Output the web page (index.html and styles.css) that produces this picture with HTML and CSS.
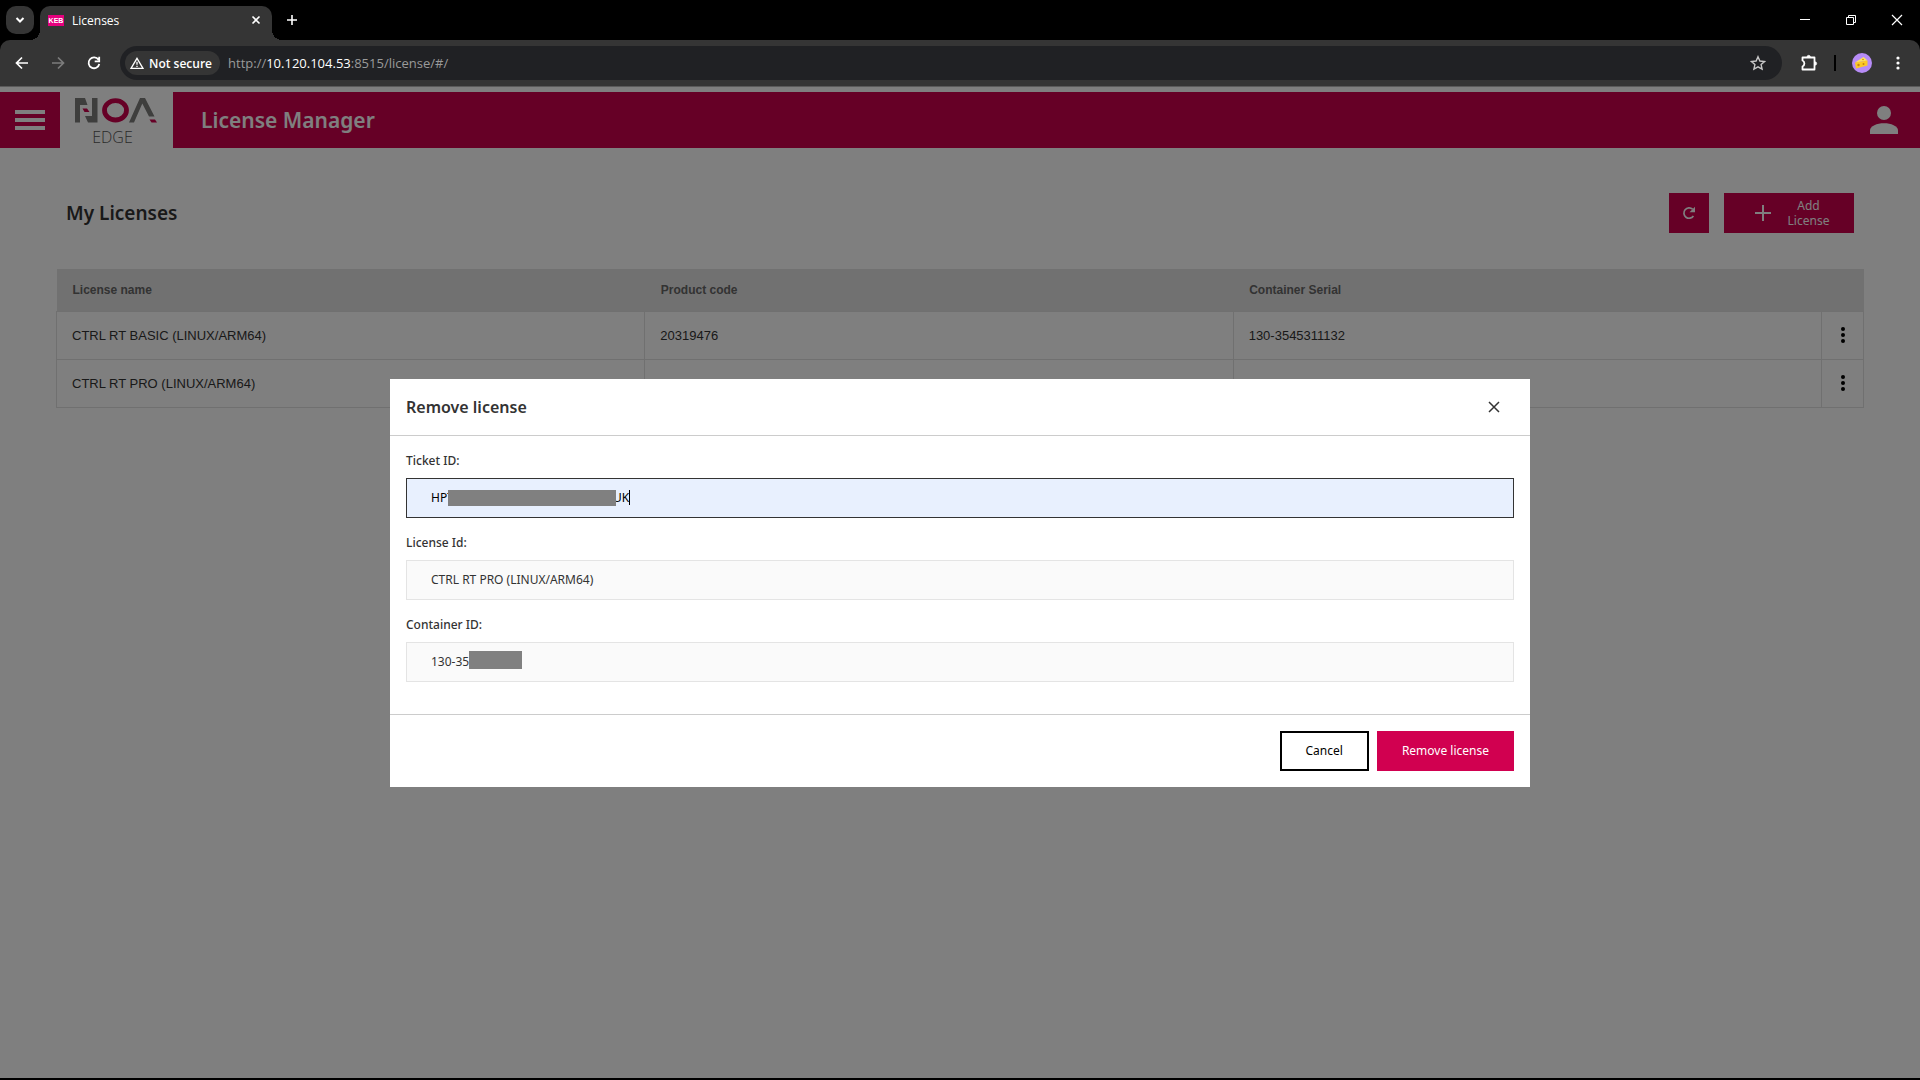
FILE: index.html
```html
<!DOCTYPE html>
<html lang="en">
<head>
    <meta charset="UTF-8">
    <meta name="viewport" content="width=device-width, initial-scale=1.0">
    <title>Licenses</title>
    <link rel="stylesheet" href="styles.css">
</head>
<body>
    <div class="tab-bar">
        <button class="tab-search" type="button" aria-label="Search tabs">
            <svg width="10" height="10" viewBox="0 0 10 10"><path d="M1.500 3l3.500 3.500L8.500 3" fill="none" stroke="#fff" stroke-width="2"/></svg>
        </button>
        <div class="tab">
            <span class="favicon">KEB</span>
            <span class="tab-title">Licenses</span>
            <button class="icon-btn" type="button" aria-label="Close tab">
                <svg width="10" height="10" viewBox="0 0 10 10"><path d="M1.500 1.500l7 7M8.500 1.500l-7 7" stroke="#fff" stroke-width="1.600"/></svg>
            </button>
        </div>
        <button class="icon-btn new-tab" type="button" aria-label="New tab">
            <svg width="12" height="12" viewBox="0 0 12 12"><path d="M6 1v10M1 6h10" stroke="#fff" stroke-width="1.600"/></svg>
        </button>
        <div class="window-controls">
            <button class="icon-btn" type="button" aria-label="Minimize">
                <svg width="12" height="12" viewBox="0 0 12 12"><path d="M1 5.500h10" stroke="#fff"/></svg>
            </button>
            <button class="icon-btn" type="button" aria-label="Restore">
                <svg width="12" height="12" viewBox="0 0 12 12"><path d="M1.500 3.500h7v7h-7zM3.500 3.500v-2h7v7h-2" fill="none" stroke="#fff"/></svg>
            </button>
            <button class="icon-btn" type="button" aria-label="Close">
                <svg width="12" height="12" viewBox="0 0 12 12"><path d="M1 1l10 10M11 1L1 11" stroke="#fff" stroke-width="1.200"/></svg>
            </button>
        </div>
    </div>

    <div class="toolbar">
        <div class="nav-buttons">
            <button class="icon-btn" type="button" aria-label="Back">
                <svg width="14" height="14" viewBox="0 0 14 14"><path d="M13 7H2M7 1.500L1.500 7L7 12.500" fill="none" stroke="#fff" stroke-width="1.700"/></svg>
            </button>
            <button class="icon-btn" type="button" aria-label="Forward">
                <svg width="14" height="14" viewBox="0 0 14 14"><path d="M1 7h11M7 1.500L12.500 7L7 12.500" fill="none" stroke="#7c7c7c" stroke-width="1.700"/></svg>
            </button>
            <button class="icon-btn" type="button" aria-label="Reload">
                <svg width="14" height="14" viewBox="0 0 14 14"><path d="M12.300 8A5.400 5.400 0 1 1 11.500 3.800M12.200 .8v4.500H7.700" fill="none" stroke="#fff" stroke-width="1.800"/></svg>
            </button>
        </div>
        <div class="address-bar">
            <button class="security" type="button">
                <svg width="14" height="12" viewBox="0 0 14 12"><path d="M7 1.300L13 11.300H1z" fill="none" stroke="#fff" stroke-width="1.300"/><path d="M7 4.800v3M7 8.700v1.300" stroke="#fff" stroke-width="1.300"/></svg>
                Not secure
            </button>
            <span class="url">http://<span class="host">10.120.104.53</span>:8515/license/#/</span>
            <button class="icon-btn" type="button" aria-label="Bookmark">
                <svg width="16" height="16" viewBox="0 0 16 16"><path d="M8 1.700l1.900 4.300 4.700.5-3.500 3.100 1 4.600L8 11.800l-4.100 2.400 1-4.600L1.400 6.500l4.700-.5z" fill="none" stroke="#c7c7c7" stroke-width="1.400"/></svg>
            </button>
        </div>
        <button class="icon-btn extensions" type="button" aria-label="Extensions">
            <svg width="18" height="18" viewBox="0 0 18 18"><path d="M2.500 3.500H14.500V15.500H2.500V12.500C5 11.500 5 7.500 2.500 6.500z" fill="none" stroke="#fff" stroke-width="1.800" stroke-linejoin="round"/><path d="M7 3a1.700 1.700 0 0 1 3.400 0zM15 7.800a1.700 1.700 0 0 1 0 3.400z" fill="#fff" stroke="#fff" stroke-width=".6"/></svg>
        </button>
        <span class="divider"></span>
        <button class="icon-btn profile" type="button" aria-label="Profile">
            <svg width="20" height="20" viewBox="0 0 20 20"><circle cx="10" cy="10" r="10" fill="#b78cf7"/><path d="M3 9.500L11.500 4l4 3.500z" fill="#ffe45c"/><path d="M3 9.500l12.500-2v5L4 15.500z" fill="#fbc926"/><g fill="#c9850f"><circle cx="6.500" cy="12" r="1.200"/><circle cx="11.500" cy="11" r="1"/><circle cx="11" cy="6.500" r=".8"/></g></svg>
        </button>
        <button class="icon-btn" type="button" aria-label="Menu">
            <svg width="4" height="14" viewBox="0 0 4 14" fill="#fff"><circle cx="2" cy="2" r="1.600"/><circle cx="2" cy="7" r="1.600"/><circle cx="2" cy="12" r="1.600"/></svg>
        </button>
    </div>

    <div class="viewport">
        <header class="app-header">
            <button class="menu-btn" type="button" aria-label="Open menu">
                <svg width="30" height="20" viewBox="0 0 30 20" fill="#fff"><path d="M0 0h30v4H0zM0 8h30v4H0zM0 16h30v4H0z"/></svg>
            </button>
            <a class="logo" href="#/">
                <svg width="82" height="25" viewBox="0 0 82 25" role="img" aria-label="NOA">
                    <path d="M0 0h10l2.500 7H5v17.500H0zM17 0h5.500v24.500H13L10 18h7z" fill="#7c7c7a"/>
                    <path d="M7.500 10.500h4.500l2.500 3.500H9.500z" fill="#cc004c"/>
                    <ellipse cx="40.500" cy="12.300" rx="11" ry="9.700" fill="none" stroke="#cc004c" stroke-width="4.800"/>
                    <path d="M54 24.500L65 0h5l9.500 18.500H74L67.300 5.500 59 24.500z" fill="#7c7c7a"/>
                    <path d="M74.500 21.500H80l2 3h-5.500z" fill="#cc004c"/>
                </svg>
                <span class="logo-sub">EDGE</span>
            </a>
            <h1 class="app-title">License Manager</h1>
            <button class="user-btn" type="button" aria-label="User">
                <svg width="28" height="28" viewBox="0 0 28 28" fill="#fff"><circle cx="14" cy="7" r="7"/><path d="M0 28v-3.500C0 20 7 17.300 14 17.300S28 20 28 24.500V28z"/></svg>
            </button>
        </header>

        <main class="content">
            <div class="content-head">
                <h2 class="content-title">My Licenses</h2>
                <button class="btn-square" type="button" aria-label="Refresh">
                    <svg width="14" height="14" viewBox="0 0 14 14"><path d="M11.400 10A5.200 5.200 0 1 1 10.600 3.200" fill="none" stroke="#fff" stroke-width="1.700"/><path d="M13 .8v5.500H7.500z" fill="#fff"/></svg>
                </button>
                <button class="btn-add" type="button">
                    <svg width="16" height="16" viewBox="0 0 16 16"><path d="M8 0v16M0 8h16" stroke="#fff" stroke-width="2"/></svg>
                    <span>Add<br>License</span>
                </button>
            </div>

            <table class="licenses">
                <thead>
                    <tr>
                        <th>License name</th>
                        <th>Product code</th>
                        <th>Container Serial</th>
                        <th class="actions"></th>
                    </tr>
                </thead>
                <tbody>
                    <tr>
                        <td>CTRL RT BASIC (LINUX/ARM64)</td>
                        <td>20319476</td>
                        <td>130-3545311132</td>
                        <td class="actions"><button class="row-menu" type="button" aria-label="Row actions"><svg width="4" height="16" viewBox="0 0 4 16"><circle cx="2" cy="2" r="2"/><circle cx="2" cy="8" r="2"/><circle cx="2" cy="14" r="2"/></svg></button></td>
                    </tr>
                    <tr>
                        <td>CTRL RT PRO (LINUX/ARM64)</td>
                        <td>20319477</td>
                        <td>130-3545311132</td>
                        <td class="actions"><button class="row-menu" type="button" aria-label="Row actions"><svg width="4" height="16" viewBox="0 0 4 16"><circle cx="2" cy="2" r="2"/><circle cx="2" cy="8" r="2"/><circle cx="2" cy="14" r="2"/></svg></button></td>
                    </tr>
                </tbody>
            </table>
        </main>

        <div class="overlay">
            <form class="modal" role="dialog" aria-labelledby="modal-title">
                <div class="modal-header">
                    <h2 class="modal-title" id="modal-title">Remove license</h2>
                    <button class="icon-btn" type="button" aria-label="Close dialog">
                        <svg width="12" height="12" viewBox="0 0 12 12"><path d="M1 1l10 10M11 1L1 11" stroke="#333" stroke-width="1.500"/></svg>
                    </button>
                </div>
                <div class="modal-body">
                    <label for="ticket">Ticket ID:</label>
                    <div class="field">
                        <input class="active" id="ticket" type="text" value="HPT                                                   UK">
                        <span class="mask mask-ticket"></span>
                        <span class="caret"></span>
                    </div>
                    <label for="license">License Id:</label>
                    <div class="field">
                        <input id="license" type="text" value="CTRL RT PRO (LINUX/ARM64)" readonly>
                    </div>
                    <label for="container">Container ID:</label>
                    <div class="field">
                        <input id="container" type="text" value="130-35" readonly>
                        <span class="mask mask-container"></span>
                    </div>
                </div>
                <div class="modal-footer">
                    <button class="btn-cancel" type="button">Cancel</button>
                    <button class="btn-remove" type="button">Remove license</button>
                </div>
            </form>
        </div>
    </div>
</body>
</html>
```
FILE: styles.css
```css
:root {
    --brand: #cc004c;
    --chrome: #353535;
    --text: #333333;
    --line: #e0e0e0;
}

* {
    box-sizing: border-box;
}

body {
    margin: 0;
    height: 100vh;
    display: flex;
    flex-direction: column;
    background-color: black;
    font-family: "Noto Sans", "Open Sans", sans-serif;
    font-size: 12px;
    color: var(--text);
}

button {
    font: inherit;
    border: none;
    padding: 0;
    margin: 0;
    cursor: pointer;
}

svg {
    display: block;
    flex: none;
}

h1, h2 {
    margin: 0;
    font-weight: 600;
}

.icon-btn {
    display: flex;
    background: none;
}

/* browser window */
.tab-bar {
    height: 40px;
    flex: none;
    display: flex;
    align-items: center;
    padding: 0 17px 0 6px;
    font-family: "Open Sans", sans-serif;
}

.tab-search {
    width: 28px;
    height: 28px;
    border-radius: 10px;
    background-color: var(--chrome);
    display: flex;
    align-items: center;
    justify-content: center;
}

.tab {
    width: 232px;
    height: 34px;
    align-self: flex-end;
    margin-left: 6px;
    padding: 0 11px 6px 8px;
    display: flex;
    align-items: center;
    gap: 8px;
    border-radius: 10px 10px 0 0;
    background-color: var(--chrome);
    color: white;
    position: relative;
}

.tab::before,
.tab::after {
    content: "";
    position: absolute;
    bottom: 0;
    width: 10px;
    height: 10px;
}

.tab::before {
    right: 100%;
    background: radial-gradient(circle at 0 0, transparent 10px, var(--chrome) 10px);
}

.tab::after {
    left: 100%;
    background: radial-gradient(circle at 100% 0, transparent 10px, var(--chrome) 10px);
}

.favicon {
    width: 16px;
    background-color: #e6007e;
    font-family: "Liberation Sans", Arial, sans-serif;
    font-size: 7px;
    font-weight: 700;
    line-height: 11px;
    text-align: center;
}

.tab-title {
    flex: 1;
}

.new-tab {
    margin-left: 14px;
}

.window-controls {
    margin-left: auto;
    display: flex;
    gap: 34px;
}

.toolbar {
    height: 47px;
    flex: none;
    display: flex;
    align-items: center;
    padding: 0 20px 0 15px;
    border-radius: 10px 10px 0 0;
    border-bottom: 1px solid #5a5a5a;
    background-color: var(--chrome);
    font-family: "Open Sans", sans-serif;
}

.nav-buttons {
    display: flex;
    gap: 22px;
}

.address-bar {
    flex: 1;
    height: 34px;
    margin-left: 19px;
    padding: 0 16px 0 5px;
    display: flex;
    align-items: center;
    border-radius: 17px;
    background-color: #202124;
}

.security {
    height: 24px;
    padding: 0 8px 0 5px;
    display: flex;
    align-items: center;
    gap: 5px;
    border-radius: 12px;
    background-color: var(--chrome);
    color: white;
    font-weight: 600;
}

.url {
    flex: 1;
    margin-left: 8px;
    font-size: 13px;
    color: #9a9a9a;
}

.host {
    color: white;
}

.extensions {
    margin-left: 18px;
}

.divider {
    width: 2px;
    height: 16px;
    margin: 0 16px;
    background-color: black;
}

.profile {
    margin-right: 24px;
}

/* license manager */
.viewport {
    flex: 1;
    position: relative;
    padding-top: 5px;
    margin-bottom: 2px;
    background-color: white;
}

.app-header {
    height: 56px;
    display: flex;
    align-items: center;
    background-color: var(--brand);
    color: white;
}

.menu-btn {
    padding: 0 15px;
    background: none;
}

.logo {
    width: 113px;
    height: 56px;
    display: flex;
    flex-direction: column;
    align-items: center;
    padding: 6px 2px 0 0;
    background-color: white;
    text-decoration: none;
}

.logo-sub {
    padding-right: 6px;
    font-family: "Open Sans", sans-serif;
    font-size: 16px;
    font-weight: 300;
    line-height: 28px;
    color: #555555;
}

.app-title {
    flex: 1;
    margin-left: 28px;
    font-size: 21px;
}

.user-btn {
    margin-right: 22px;
    background: none;
}

.content {
    padding: 45px 56px;
}

.content-head {
    display: flex;
    align-items: center;
    gap: 15px;
    padding: 0 10px;
    margin-bottom: 36px;
}

.content-title {
    flex: 1;
    font-size: 19px;
}

.btn-square,
.btn-add {
    height: 40px;
    display: flex;
    align-items: center;
    justify-content: center;
    background-color: var(--brand);
    color: white;
}

.btn-square {
    width: 40px;
}

.btn-add {
    width: 130px;
    gap: 17px;
    padding-left: 6px;
    line-height: 15px;
}

.licenses {
    width: 100%;
    table-layout: fixed;
    border-collapse: collapse;
    font-family: "Liberation Sans", Arial, sans-serif;
    font-size: 13px;
}

.licenses th {
    height: 42px;
    padding: 0 16px;
    background-color: #e2e2e2;
    font-size: 12px;
    text-align: left;
    color: #666666;
}

.licenses td {
    height: 48px;
    padding: 0 15px;
    border: 1px solid var(--line);
}

.licenses .actions {
    width: 42px;
    padding: 0;
}

.row-menu {
    width: 100%;
    display: flex;
    justify-content: center;
    background: none;
}

/* dialog */
.overlay {
    position: absolute;
    inset: 0;
    display: flex;
    align-items: center;
    justify-content: center;
    background-color: rgba(0, 0, 0, 0.5);
}

.modal {
    width: 100%;
    max-width: 1140px;
    background-color: white;
}

.modal-header {
    height: 57px;
    display: flex;
    align-items: center;
    justify-content: space-between;
    padding: 0 30px 0 16px;
    border-bottom: 1px solid #cccccc;
}

.modal-title {
    font-size: 16px;
}

.modal-body {
    padding: 16px 16px 32px;
}

.modal-body label {
    display: block;
    margin-bottom: 8px;
    line-height: 18px;
    font-weight: 500;
}

.field {
    position: relative;
    margin-bottom: 16px;
}

.field:last-child {
    margin-bottom: 0;
}

.field input {
    display: block;
    width: 100%;
    height: 40px;
    padding: 0 24px;
    border: 1px solid #e4e4e4;
    border-radius: 0;
    background-color: #fafafa;
    font: inherit;
    color: var(--text);
    outline: none;
}

.field .active {
    border-color: #333333;
    background-color: #e8f0fe;
    color: black;
}

/* grey bars over the private part of the ids */
.mask {
    position: absolute;
    background-color: #808080;
}

.mask-ticket {
    left: 42px;
    top: 12px;
    width: 168px;
    height: 16px;
}

.mask-container {
    left: 63px;
    top: 9px;
    width: 53px;
    height: 18px;
}

.caret {
    position: absolute;
    left: 223px;
    top: 12px;
    width: 1px;
    height: 15px;
    background-color: black;
}

.modal-footer {
    display: flex;
    justify-content: flex-end;
    gap: 8px;
    padding: 16px;
    border-top: 1px solid #cccccc;
}

.btn-cancel,
.btn-remove {
    height: 40px;
}

.btn-cancel {
    padding: 0 24px;
    border: 2px solid black;
    background-color: white;
    color: black;
}

.btn-remove {
    padding: 0 25px;
    background-color: #d10050;
    color: white;
}
```
